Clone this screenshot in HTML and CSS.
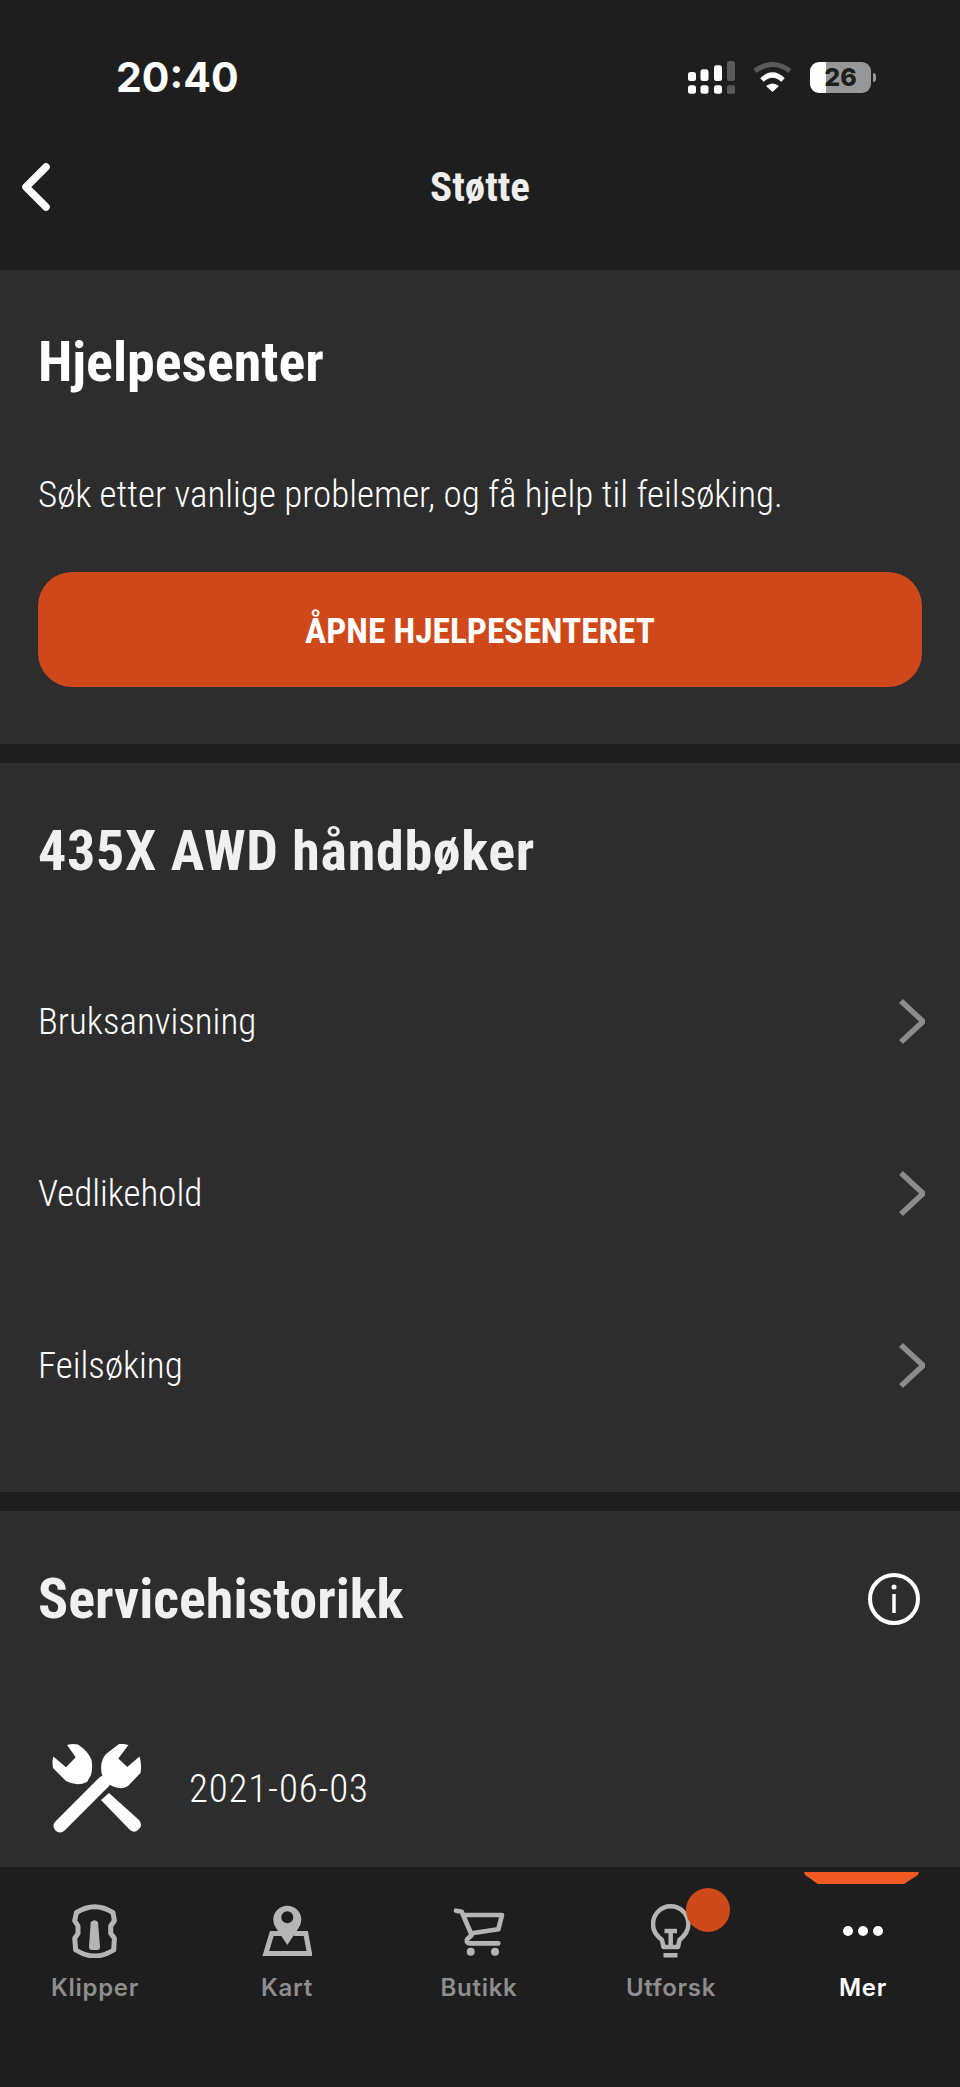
FILE: index.html
```html
<!doctype html>
<html lang="no">
<head>
<meta charset="utf-8">
<title>Støtte</title>
<link rel="stylesheet" href="styles.css">
</head>
<body>
<div class="app">
  <header class="top">
    <div class="status">
      <span class="time">20:40</span>
      <div class="status-icons">
        <svg class="signal" width="47" height="33" viewBox="0 0 47 33">
          <g fill="#fff">
            <rect x="0" y="11" width="8" height="9" rx="2.5"/>
            <rect x="12.5" y="8.3" width="8" height="11.7" rx="2.5"/>
            <rect x="26" y="4.3" width="8" height="15.7" rx="2.5"/>
            <rect x="0" y="24.3" width="8" height="8.4" rx="2.5"/>
            <rect x="12.5" y="24.3" width="8" height="8.4" rx="2.5"/>
            <rect x="26" y="24.3" width="8" height="8.4" rx="2.5"/>
          </g>
          <g fill="#5a5a5a">
            <rect x="39" y="0" width="8" height="20" rx="2.5"/>
            <rect x="39" y="24.3" width="8" height="8.4" rx="1.5"/>
          </g>
        </svg>
        <svg class="wifi" width="39" height="30" viewBox="0 0 39 30" fill="none">
          <path d="M2 9Q19.5-4 37 9" stroke="#5a5a5a" stroke-width="5"/>
          <path d="M9 18Q19.5 8 30 18" stroke="#fff" stroke-width="5"/>
          <path d="M13 24Q19.5 19 26 24L19.5 30Z" fill="#fff"/>
        </svg>
        <div class="battery">26</div>
      </div>
    </div>
    <nav class="nav">
      <svg class="back" width="28" height="48" viewBox="0 0 28 48" fill="none">
        <path d="M24 4L4 24L24 44" stroke="#fff" stroke-width="7.5" stroke-linecap="round" stroke-linejoin="round"/>
      </svg>
      <h1 class="nav-title">Støtte</h1>
    </nav>
  </header>

  <section class="panel panel-help">
    <h2 class="heading heading-white">Hjelpesenter</h2>
    <p class="lead">Søk etter vanlige problemer, og få hjelp til feilsøking.</p>
    <a class="cta">ÅPNE HJELPESENTERET</a>
  </section>

  <section class="panel panel-manuals">
    <h2 class="heading heading-wide">435X AWD håndbøker</h2>
    <ul class="rows">
      <li class="row"><span>Bruksanvisning</span>
        <svg width="26" height="45" viewBox="0 0 26 45" fill="none"><path d="M2 2L24 22.5L2 43" stroke="#8c8c8c" stroke-width="5.5"/></svg></li>
      <li class="row"><span>Vedlikehold</span>
        <svg width="26" height="45" viewBox="0 0 26 45" fill="none"><path d="M2 2L24 22.5L2 43" stroke="#8c8c8c" stroke-width="5.5"/></svg></li>
      <li class="row"><span>Feilsøking</span>
        <svg width="26" height="45" viewBox="0 0 26 45" fill="none"><path d="M2 2L24 22.5L2 43" stroke="#8c8c8c" stroke-width="5.5"/></svg></li>
    </ul>
  </section>

  <section class="panel panel-service">
    <div class="service-head">
      <h2 class="heading">Servicehistorikk</h2>
      <svg width="52" height="52" viewBox="0 0 52 52" fill="none" stroke="#fff">
        <circle cx="26" cy="26" r="24" stroke-width="4"/>
        <path d="M26 21V40" stroke-width="3.5"/>
        <circle cx="26" cy="14" r="2.5" fill="#fff" stroke="none"/>
      </svg>
    </div>
    <div class="service-row">
      <svg width="90" height="90" viewBox="0 0 90 90" fill="#fff">
        <path d="M15 1Q20-.5 26 .5Q36 7 39.5 16Q41 24 39 31L35 38Q25 43 14 37L1 24Q-.2 18 1.3 12.5L14 23.3L23.7 13.3Z"/>
        <path d="M49 56L57 49L87 76Q91 81 87 85Q83 90 78 86Z"/>
        <path d="M8 82L52 38" stroke="#fff" stroke-width="13" stroke-linecap="round"/>
        <path d="M67 0Q72-.5 76.5 1L66.3 14.5L75.3 23L87.5 12.5Q90 20 88.5 29L76 42Q68 47 58 41L50 31Q47 18 54 10Z"/>
      </svg>
      <span class="date">2021-06-03</span>
    </div>
  </section>

  <footer class="tabs">
    <div class="tab">
      <svg class="tab-icon" width="46" height="54" viewBox="0 0 46 54" fill="none">
        <path d="M4.4 8.7Q22.7-3.3 41 8.7L42.4 16.7L38.7 22V29.3L42.4 34.3L41.7 46Q22.7 58 3.7 46L2.7 34.3L6 29.3V22L2.7 16.7Z" stroke="#b5b5b5" stroke-width="5" stroke-linejoin="round"/>
        <path d="M18.7 18Q22.5 14.5 26 18L28 43Q28 46 25 46H20Q17 46 17 43Z" fill="#b5b5b5"/>
      </svg>
      <span class="tab-label">Klipper</span>
    </div>
    <div class="tab">
      <svg class="tab-icon" width="50" height="54" viewBox="0 0 50 54" fill="none">
        <path d="M19 29.5H9.8L3.8 49.5H47.5L43.8 29.5H32" stroke="#b5b5b5" stroke-width="5"/>
        <path fill-rule="evenodd" d="M25.3 41L14 24A14 14 0 1 1 36.6 24ZM25.3 7.3a6 6 0 1 0 0 12a6 6 0 1 0 0-12Z" fill="#b5b5b5"/>
      </svg>
      <span class="tab-label">Kart</span>
    </div>
    <div class="tab">
      <svg class="tab-icon" width="54" height="54" viewBox="0 0 54 54" fill="none">
        <path d="M4 6.7L9.7 7.7L19.7 31L15 35.5Q14 39.3 18 39.3H46.3M13 11H50L46.3 25.3L19.7 29.3" stroke="#b5b5b5" stroke-width="4.7" stroke-linecap="round" stroke-linejoin="round"/>
        <circle cx="18.7" cy="47.7" r="4" fill="#b5b5b5"/>
        <circle cx="43" cy="47.7" r="4" fill="#b5b5b5"/>
      </svg>
      <span class="tab-label">Butikk</span>
    </div>
    <div class="tab tab-explore">
      <svg class="tab-icon" width="40" height="54" viewBox="0 0 40 54" fill="none" stroke="#b5b5b5" stroke-width="4.5">
        <path d="M12.5 43L11 36C5 31 2 27 2 20A17.7 17.7 0 0 1 37.4 20C37.4 27 34 31 28.5 36L27 43Z" stroke-linejoin="round"/>
        <path d="M13.5 27H26M19.7 27V42M12.5 51.2H26.5"/>
      </svg>
      <span class="badge"></span>
      <span class="tab-label">Utforsk</span>
    </div>
    <div class="tab tab-active">
      <span class="indicator"></span>
      <svg class="tab-icon" width="40" height="54" viewBox="0 0 40 54" fill="#fff">
        <circle cx="5" cy="27" r="5"/><circle cx="20" cy="27" r="5"/><circle cx="35" cy="27" r="5"/>
      </svg>
      <span class="tab-label">Mer</span>
    </div>
  </footer>
</div>
</body>
</html>
```
FILE: styles.css
```css
* { box-sizing: border-box; }
html, body { margin: 0; padding: 0; }
body { background: #1e1e1e; color: #fff; font-family: "Roboto Condensed", Roboto, sans-serif; }
.app { width: 960px; height: 2087px; display: flex; flex-direction: column; overflow: hidden; }

/* header */
.top { height: 270px; flex: none; }
.status { height: 115px; padding: 39px 89px 0 116px; display: flex; align-items: center; justify-content: space-between; }
.time { font-family: Inter, sans-serif; font-weight: 700; font-size: 41px; line-height: 44px; }
.status-icons { display: flex; align-items: center; gap: 18px; }
.battery { position: relative; width: 61px; height: 31px; border-radius: 9px; background: linear-gradient(90deg, #fff 16px, #979797 16px); color: #1e1e1e; font-family: Inter, sans-serif; font-weight: 800; font-size: 25px; line-height: 31px; text-align: center; }
.battery::after { content: ""; position: absolute; left: 63px; top: 11px; width: 3px; height: 9px; border-radius: 0 3px 3px 0; background: #979797; }
.nav { position: relative; height: 144px; display: flex; align-items: center; justify-content: center; }
.back { position: absolute; left: 22px; top: 48px; }
.nav-title { margin: 0; font-size: 41px; font-weight: 700; line-height: 48px; color: #eee; }

/* panels */
.panel { background: #2d2d2d; }
.panel-help { height: 474px; padding: 60px 38px 0; margin-bottom: 19px; }
.panel-manuals { height: 729px; padding: 56px 0 0 38px; margin-bottom: 19px; }
.panel-service { flex: 1; min-height: 0; overflow: hidden; padding: 56px 40px 0 38px; }
.heading { margin: 0; font-size: 56px; font-weight: 700; line-height: 64px; color: #f0f0f0; }
.heading-white { color: #fff; }
.heading-wide { letter-spacing: .7px; }
.lead { margin: 79px 0 0; font-size: 37px; font-weight: 300; line-height: 44px; }
.cta { margin-top: 55px; height: 115px; padding-top: 2px; display: flex; align-items: center; justify-content: center; background: #cf4819; border-radius: 34px; font-size: 35.4px; font-weight: 700; color: #fff; }

/* rows */
.rows { list-style: none; margin: 52px 0 0; padding: 0 35px 0 0; }
.row { height: 172px; display: flex; align-items: center; justify-content: space-between; font-size: 37px; font-weight: 300; }

/* service */
.service-head { display: flex; align-items: center; justify-content: space-between; }
.service-row { margin-top: 113px; padding-left: 14px; display: flex; align-items: center; gap: 47px; }
.date { font-size: 39px; font-weight: 300; letter-spacing: .8px; }

/* tab bar */
.tabs { position: relative; height: 220px; flex: none; display: flex; background: #1e1e1e; }
.tab { position: relative; width: 192px; padding: 37px 2px 0 0; display: flex; flex-direction: column; align-items: center; }
.tab-icon { display: block; }
.tab-label { margin-top: 16px; font-family: Inter, sans-serif; font-weight: 600; font-size: 24px; letter-spacing: .7px; line-height: 28px; color: #8e8e8e; }
.tab-active .tab-label { color: #fff; }
.badge { position: absolute; left: 110px; top: 21px; width: 44px; height: 44px; border-radius: 50%; background: #cf4a1b; }
.indicator { position: absolute; left: 36px; top: 5px; width: 115px; height: 12px; background: #f05a22; clip-path: polygon(0 0, 100% 0, 99% 25%, 87% 100%, 12% 100%, 1% 25%); }
```
